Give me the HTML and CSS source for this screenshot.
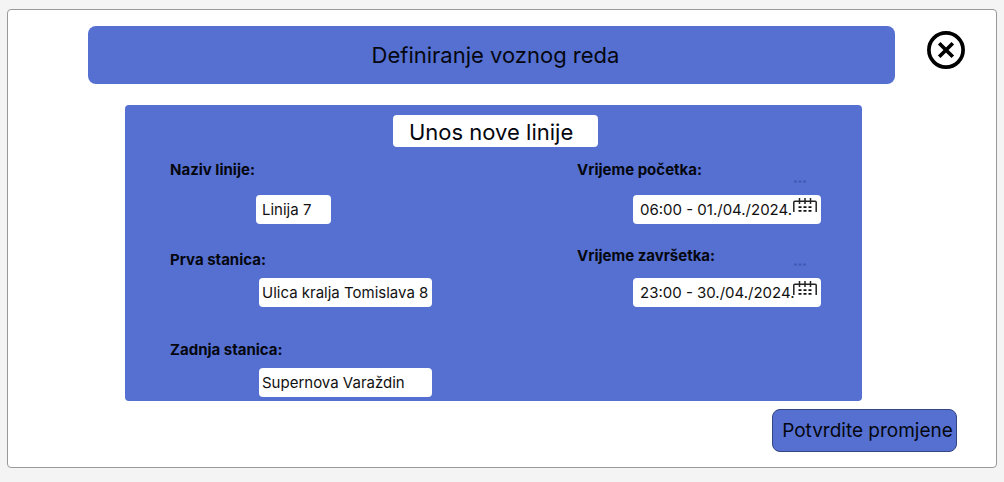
FILE: index.html
```html
<!DOCTYPE html>
<html lang="hr">
<head>
<meta charset="utf-8">
<title>Definiranje voznog reda</title>
<link rel="stylesheet" href="styles.css">
</head>
<body>
<form class="card">
  <header class="header">
    <h1 class="banner">Definiranje voznog reda</h1>
    <button class="close" type="button" aria-label="Zatvori">
      <svg viewBox="0 0 38 38" width="38" height="38" fill="none" stroke="#000">
        <circle cx="19" cy="19" r="17.1" stroke-width="3.7"/>
        <path d="M12.2 12.2 25.8 25.8M25.8 12.2 12.2 25.8" stroke-width="3.7"/>
      </svg>
    </button>
  </header>
  <section class="panel">
    <h2 class="subtitle">Unos nove linije</h2>
    <div class="columns">
      <div class="column">
        <div class="field">
          <label for="line">Naziv linije:</label>
          <input class="short" id="line" type="text" value="Linija 7">
        </div>
        <div class="field">
          <label for="first">Prva stanica:</label>
          <input class="station" id="first" type="text" value="Ulica kralja Tomislava 8">
        </div>
        <div class="field">
          <label for="last">Zadnja stanica:</label>
          <input class="station" id="last" type="text" value="Supernova Varaždin">
        </div>
      </div>
      <div class="column dates">
        <div class="field">
          <label for="start">Vrijeme početka:</label>
          <div class="date">
            <input id="start" type="text" value="06:00 - 01./04./2024.">
            <svg class="calendar" viewBox="0 0 24 36" width="24" height="36" fill="none" aria-hidden="true">
              <path class="faint" d="M1 2.5h3M5.5 2.5h3M10 2.5h3"/>
              <path class="frame" d="M.8 33V23.2Q.8 22.2 1.8 22.2H22.2Q23.2 22.2 23.2 23.2V33M6.5 19v6M12 19v6M17.5 19v6"/>
              <path class="days" d="M5.5 28.2h3M10.5 28.2h3M15.5 28.2h3M5.5 31.8h3M10.5 31.8h3M15.5 31.8h3"/>
            </svg>
          </div>
        </div>
        <div class="field">
          <label for="end">Vrijeme završetka:</label>
          <div class="date">
            <input id="end" type="text" value="23:00 - 30./04./2024.">
            <svg class="calendar" viewBox="0 0 24 36" width="24" height="36" fill="none" aria-hidden="true">
              <path class="faint" d="M1 2.5h3M5.5 2.5h3M10 2.5h3"/>
              <path class="frame" d="M.8 33V23.2Q.8 22.2 1.8 22.2H22.2Q23.2 22.2 23.2 23.2V33M6.5 19v6M12 19v6M17.5 19v6"/>
              <path class="days" d="M5.5 28.2h3M10.5 28.2h3M15.5 28.2h3M5.5 31.8h3M10.5 31.8h3M15.5 31.8h3"/>
            </svg>
          </div>
        </div>
      </div>
    </div>
  </section>
  <button class="confirm" type="submit">Potvrdite promjene</button>
</form>
</body>
</html>
```
FILE: styles.css
```css
* {
  box-sizing: border-box;
}

body {
  margin: 0;
  padding: 9px 7px 14px;
  background: #f4f4f4;
  color: #05070f;
  font-family: Inter, sans-serif;
}

.card {
  display: flex;
  flex-direction: column;
  padding: 16px 31px 15px 80px;
  background: #fff;
  border: 1px solid #999;
  border-radius: 4px;
}

.header {
  display: flex;
  align-items: flex-start;
  gap: 32px;
}

.banner {
  flex: 1;
  margin: 0;
  padding: 14px 0 14px 8px;
  background: #5570d1;
  border-radius: 8px;
  font-size: 22px;
  font-weight: 400;
  line-height: 30px;
  text-align: center;
}

.close {
  display: block;
  margin-top: 5px;
  padding: 0;
  border: 0;
  background: none;
}

.close svg {
  display: block;
}

.panel {
  margin: 21px 103px 0 37px;
  padding: 10px 41px 4px 45px;
  background: #5570d1;
  border-radius: 4px;
}

.subtitle {
  width: 205px;
  margin: 0 auto;
  padding: 2px 0 0 16px;
  background: #fff;
  border-radius: 4px;
  font-size: 22px;
  font-weight: 400;
  line-height: 30px;
}

.columns {
  display: flex;
  justify-content: space-between;
  margin-top: 14px;
}

.column {
  display: grid;
  grid-template-rows: 63px 83px 90px;
}

.dates {
  width: 244px;
}

.field {
  display: flex;
  flex-direction: column;
  justify-content: flex-end;
  gap: 9px;
}

.dates .field {
  gap: 13px;
}

.column .field:first-child {
  gap: 16px;
}

label {
  font-size: 15px;
  font-weight: 700;
  line-height: 18px;
}

input {
  display: block;
  height: 29px;
  padding: 0 0 0 3px;
  border: 0;
  border-radius: 4px;
  background: #fff;
  color: #111;
  font-family: inherit;
  font-size: 15px;
}

.short {
  width: 75px;
  margin-left: 86px;
  padding-left: 6px;
}

.station {
  width: 173px;
  margin-left: 89px;
}

.date {
  position: relative;
  margin-left: 56px;
}

.date input {
  width: 100%;
  padding-left: 7px;
}

.calendar {
  position: absolute;
  top: -16px;
  right: 4px;
  pointer-events: none;
}

.faint {
  stroke: #4059b4;
  stroke-width: 2;
}

.frame {
  stroke: #222;
  stroke-width: 1.5;
}

.days {
  stroke: #111;
  stroke-width: 1.8;
}

.confirm {
  align-self: flex-end;
  width: 185px;
  height: 43px;
  margin: 8px 8px 0 0;
  padding: 0 0 0 6px;
  background: #5570d1;
  border: 1px solid #344681;
  border-radius: 8px;
  color: inherit;
  font-family: inherit;
  font-size: 19px;
  white-space: nowrap;
}
```
